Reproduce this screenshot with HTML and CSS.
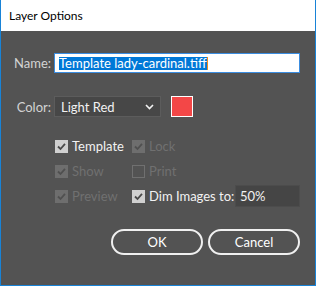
FILE: index.html
```html
<!DOCTYPE html>
<html lang="en">
  <head>
    <meta charset="UTF-8" />
    <title>Layer Options</title>
    <link rel="stylesheet" href="styles.css">
  </head>
  <body>
    <div class="dialog">
      <div class="titlebar">Layer Options</div>
      <div class="content">
        <div class="field-row name-row">
          <label class="field-label">Name:</label>
          <div class="name-input"><span class="selected">Template lady-cardinal.tiff</span><span class="caret"></span></div>
        </div>
        <div class="field-row color-row">
          <label class="field-label">Color:</label>
          <div class="select">
            <span>Light Red</span>
            <svg class="chevron" width="9" height="6" viewBox="0 0 9 6"><polyline points="1,1 4.5,4.5 8,1" fill="none" stroke="#f2f2f2" stroke-width="1.6"/></svg>
          </div>
          <div class="swatch"></div>
        </div>
        <div class="options">
          <div class="option">
            <span class="box checked"><svg width="13" height="13" viewBox="0 0 13 13"><polyline points="3,6.5 5.5,9 10,3.8" fill="none" stroke="#4a4a4a" stroke-width="1.8"/></svg></span>
            <span>Template</span>
          </div>
          <div class="option disabled">
            <span class="box checked"><svg width="13" height="13" viewBox="0 0 13 13"><polyline points="3,6.5 5.5,9 10,3.8" fill="none" stroke="#505050" stroke-width="1.8"/></svg></span>
            <span>Lock</span>
          </div>
          <div class="option disabled">
            <span class="box checked"><svg width="13" height="13" viewBox="0 0 13 13"><polyline points="3,6.5 5.5,9 10,3.8" fill="none" stroke="#505050" stroke-width="1.8"/></svg></span>
            <span>Show</span>
          </div>
          <div class="option disabled">
            <span class="box"></span>
            <span>Print</span>
          </div>
          <div class="option disabled">
            <span class="box checked"><svg width="13" height="13" viewBox="0 0 13 13"><polyline points="3,6.5 5.5,9 10,3.8" fill="none" stroke="#505050" stroke-width="1.8"/></svg></span>
            <span>Preview</span>
          </div>
          <div class="option">
            <span class="box checked"><svg width="13" height="13" viewBox="0 0 13 13"><polyline points="3,6.5 5.5,9 10,3.8" fill="none" stroke="#4a4a4a" stroke-width="1.8"/></svg></span>
            <span class="dim-label">Dim Images to:</span>
            <div class="percent">50%</div>
          </div>
        </div>
        <div class="buttons">
          <button class="btn">OK</button>
          <button class="btn">Cancel</button>
        </div>
      </div>
    </div>
  </body>
</html>
```
FILE: styles.css
```css
* {
  margin: 0;
  padding: 0;
  box-sizing: border-box;
}
body {
  font-family: Lato, "Open Sans", sans-serif;
  background: #535353;
}
.dialog {
  width: 316px;
  height: 286px;
  border: 1px solid #1883d7;
  border-top: none;
  display: flex;
  flex-direction: column;
}
.titlebar {
  height: 31px;
  background: #fff;
  color: #000;
  font-size: 12px;
  line-height: 31px;
  padding-left: 8px;
}
.content {
  flex: 1;
  background: #535353;
  padding: 22px 15px 0 0;
  font-size: 13px;
}
.field-row {
  display: flex;
  align-items: center;
}
.field-label {
  width: 50px;
  text-align: right;
  color: #d4d4d4;
  margin-right: 3px;
}
.name-input {
  width: 246px;
  height: 20px;
  background: #fff;
  border: 1px solid #3b8de0;
  display: flex;
  align-items: center;
  padding-left: 4px;
}
.selected {
  background: #0078d7;
  color: #fff;
  line-height: 13px;
}
.caret {
  width: 1px;
  height: 13px;
  background: #f08c1c;
}
.color-row {
  margin-top: 23px;
}
.select {
  width: 107px;
  height: 21px;
  background: #474747;
  border: 1px solid #5c5c5c;
  color: #f2f2f2;
  display: flex;
  align-items: center;
  justify-content: space-between;
  padding: 0 6px 0 6px;
}
.swatch {
  width: 22px;
  height: 21px;
  margin-left: 10px;
  background: #f34747;
  border: 1px solid #fff;
}
.options {
  margin-top: 18px;
  margin-left: 54px;
  display: grid;
  grid-template-columns: 77px 1fr;
  row-gap: 3px;
}
.option {
  height: 22px;
  display: flex;
  align-items: center;
  color: #f2f2f2;
  white-space: nowrap;
}
.option.disabled {
  color: #707070;
}
.box {
  width: 13px;
  height: 13px;
  margin-right: 4px;
  border: 1px solid #707070;
  display: flex;
  flex-shrink: 0;
}
.box.checked {
  border: none;
  background: #d0d0d0;
}
.disabled .box.checked {
  background: #6e6e6e;
}
.percent {
  width: 65px;
  height: 22px;
  margin-left: auto;
  background: #454545;
  border: 1px solid #4c4c4c;
  color: #f2f2f2;
  line-height: 20px;
  padding-left: 4px;
}
.buttons {
  display: flex;
  justify-content: flex-end;
  gap: 5px;
  margin-top: 22px;
}
.btn {
  width: 92px;
  height: 26px;
  border: 2px solid #f0f0f0;
  border-radius: 13px;
  background: transparent;
  color: #fff;
  font-family: inherit;
  font-size: 13px;
}
```
